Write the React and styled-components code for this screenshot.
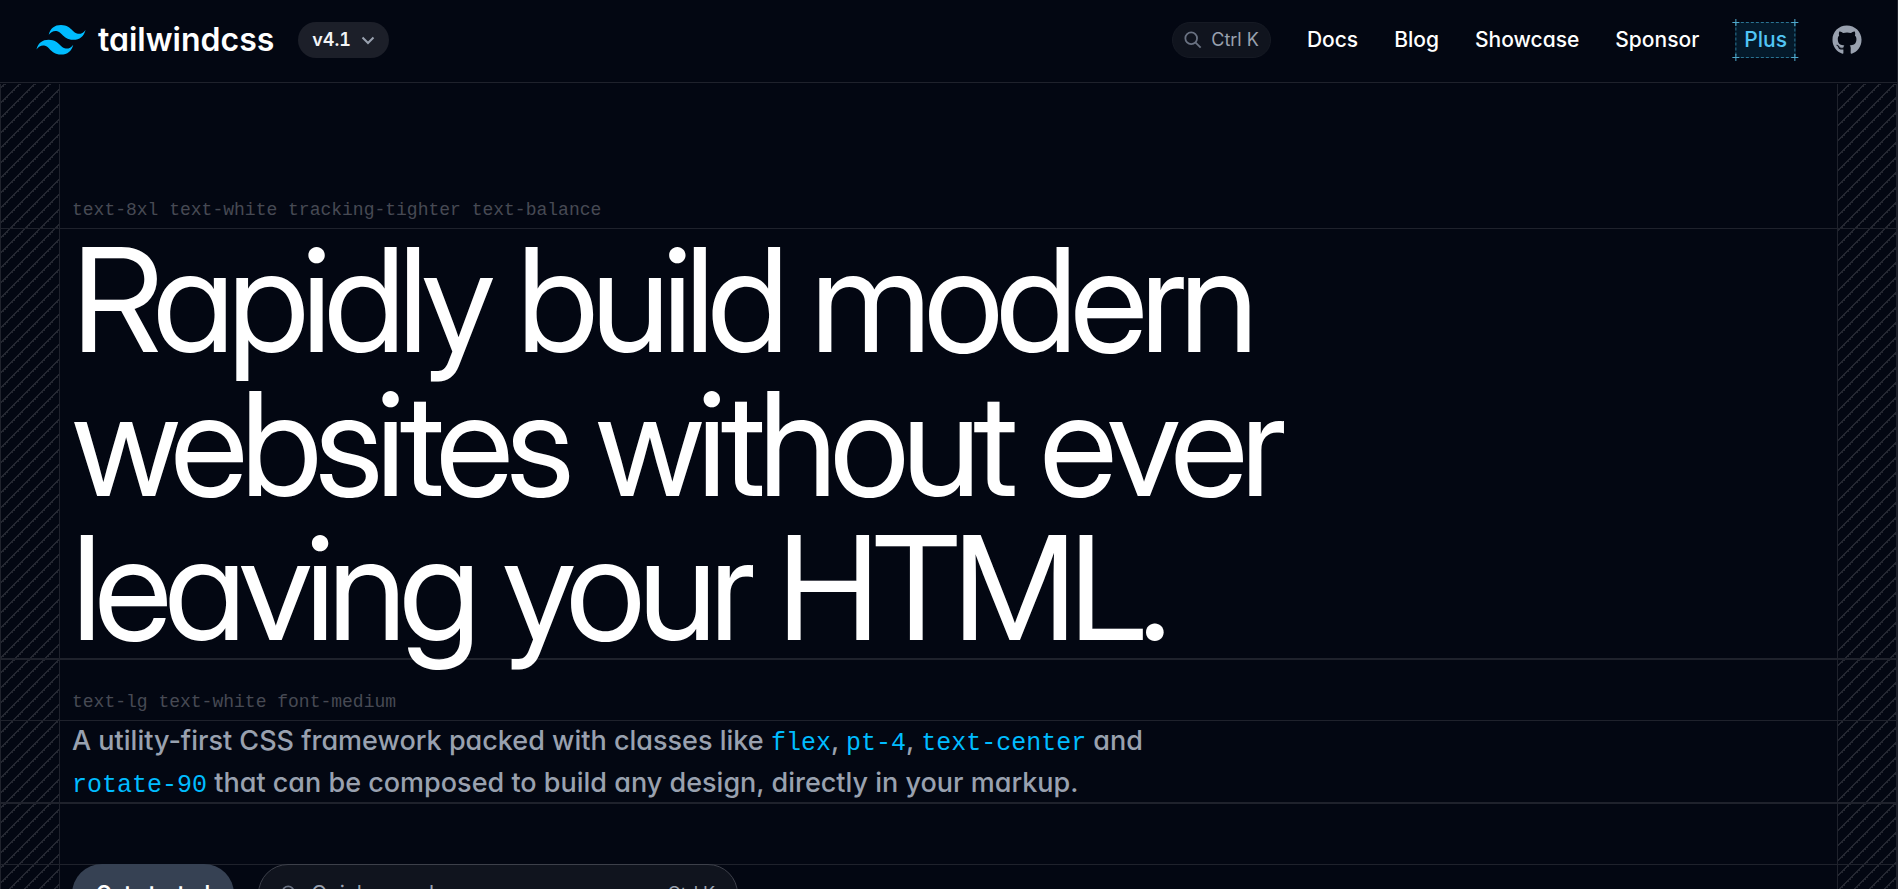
import React from "react";
import styled, { createGlobalStyle } from "styled-components";
import { FaGithub } from "react-icons/fa";

const SANS = `Inter, "Liberation Sans", sans-serif`;
const DISPLAY = `"Inter Display", ${SANS}`;
const MONO = `"Liberation Mono", monospace`;
const LINE = "#1f222c";
const HATCH = "#242731";

const GlobalStyle = createGlobalStyle`
  * {
    box-sizing: border-box;
  }
  html {
    scrollbar-width: none;
  }
  body {
    margin: 0;
    background: #030712;
    color: #fff;
    font-family: ${SANS};
    font-feature-settings: "cv11";
    -webkit-font-smoothing: antialiased;
  }
`;

const Page = styled.div`
  min-height: 100vh;
  border-right: 1px solid ${LINE};
`;
const Header = styled.header`
  display: flex;
  align-items: center;
  justify-content: space-between;
  height: 83px;
  padding: 0 35px 2px 36px;
  margin-bottom: 1px;
  border-bottom: 1px solid ${LINE};
`;
const Brand = styled.div`
  display: flex;
  align-items: center;
  gap: 24px;
`;
const Logo = styled.a`
  display: flex;
  align-items: center;
  gap: 12px;
  color: #fff;
  font-size: 32px;
  line-height: 36px;
  font-weight: 600;
  text-decoration: none;
  svg {
    display: block;
    width: 50px;
    height: 30px;
    fill: #00bcff;
  }
`;
const Version = styled.button`
  display: flex;
  align-items: center;
  gap: 10px;
  height: 36px;
  padding: 0 14px;
  border: 0;
  border-radius: 18px;
  background: #1c1f29;
  color: #f3f4f6;
  font: 600 18px/24px ${SANS};
  font-feature-settings: "cv11", "tnum";
  svg {
    width: 14px;
    height: 14px;
    fill: none;
    stroke: #99a1af;
    stroke-width: 2;
  }
`;
const Nav = styled.nav`
  display: flex;
  align-items: center;
  gap: 36px;
`;
const NavLink = styled.a`
  color: #fff;
  font-size: 21px;
  line-height: 36px;
  font-weight: 500;
  text-decoration: none;
`;
const SearchPill = styled.button`
  display: flex;
  align-items: center;
  gap: 9px;
  height: 36px;
  padding: 0 11px;
  border: 1px solid #161a24;
  border-radius: 18px;
  background: #10141e;
  color: #99a1af;
  font: 400 18px/24px ${SANS};
`;
const SearchIcon = styled.svg`
  width: 18px;
  height: 18px;
  fill: none;
  stroke: #6a7282;
  stroke-width: 2;
`;
const PlusLink = styled(NavLink)`
  position: relative;
  padding: 0 9px;
  color: #51c5f5;
  background: #04192a;
  svg {
    position: absolute;
    inset: -3px;
    width: calc(100% + 6px);
    height: calc(100% + 6px);
  }
`;
const GitHub = styled.a`
  display: flex;
  color: #99a1af;
  font-size: 30px;
`;
const Layout = styled.main`
  display: grid;
  grid-template-columns: 60px 1fr 60px;
  grid-template-rows: 144px auto 60px auto 60px auto;
`;
const Gutter = styled.div`
  grid-row: 1 / -1;
  grid-column: ${(props) => props.$column};
  border: 1px solid ${LINE};
  border-width: 0 1px;
  background-image: repeating-linear-gradient(
    315deg,
    ${HATCH} 0,
    ${HATCH} 2px,
    transparent 0,
    transparent 50%
  );
  background-size: 15px 15px;
  background-attachment: fixed;
`;
const Row = styled.div`
  grid-column: 1 / -1;
  grid-row: ${(props) => props.$row};
  padding: 0 72px;
`;
const LinedRow = styled(Row)`
  box-shadow: inset 0 1px ${LINE}, inset 0 -2px ${LINE};
`;
const LabelRow = styled(Row)`
  display: flex;
  align-items: flex-end;
  color: #474a54;
  font: 400 18px/36px ${MONO};
`;
const Title = styled.h1`
  max-width: 1344px;
  margin: 0;
  font-family: ${DISPLAY};
  font-size: 144px;
  line-height: 144px;
  font-weight: 400;
  letter-spacing: -0.05em;
  text-wrap: balance;
`;
const Lead = styled.p`
  max-width: 1152px;
  margin: 0;
  color: #99a1af;
  font-size: 27px;
  line-height: 42px;
  font-weight: 500;
  code {
    color: #00bcff;
    font-family: ${MONO};
    font-size: 25px;
    font-weight: 400;
    line-height: 36px;
  }
`;
const Actions = styled(Row)`
  display: flex;
  gap: 24px;
  box-shadow: inset 0 1px ${LINE};
`;
const GetStarted = styled.a`
  height: 60px;
  padding: 12px 24px;
  border-radius: 30px;
  background: #364153;
  color: #fff;
  font-size: 21px;
  line-height: 36px;
  font-weight: 600;
  text-decoration: none;
`;
const QuickSearch = styled.button`
  display: flex;
  align-items: center;
  gap: 12px;
  width: 480px;
  height: 60px;
  padding: 0 22px;
  border: 1px solid #3d404a;
  border-radius: 30px;
  background: #10141e;
  color: #99a1af;
  font: 400 21px/36px ${SANS};
`;
const Shortcut = styled.kbd`
  margin-left: auto;
  font: 400 18px/36px ${SANS};
`;

const LINKS = ["Docs", "Blog", "Showcase", "Sponsor"];

const Magnifier = () => (
  <SearchIcon viewBox="0 0 20 20" aria-hidden="true">
    <circle cx="8" cy="8" r="6.5" />
    <path d="M12.6 12.6 L18.5 18.5" />
  </SearchIcon>
);

const PlusFrame = () => (
  <svg viewBox="0 0 66 42" fill="none" aria-hidden="true">
    <rect
      x="3.5"
      y="3.5"
      width="59"
      height="35"
      stroke="#2a7392"
      strokeDasharray="3 2"
    />
    <path
      stroke="#51a9cc"
      d="M0 3.5h7M3.5 0v7M59 3.5h7M62.5 0v7M0 38.5h7M3.5 35v7M59 38.5h7M62.5 35v7"
    />
  </svg>
);

const App = () => {
  return (
    <Page>
      <GlobalStyle />
      <Header>
        <Brand>
          <Logo href="#">
            <svg viewBox="0 0 54 33" aria-hidden="true">
              <path d="M27 0c-7.2 0-11.7 3.6-13.5 10.8 2.7-3.6 5.85-4.95 9.45-4.05 2.054.513 3.522 2.004 5.147 3.653C30.744 13.09 33.808 16.2 40.5 16.2c7.2 0 11.7-3.6 13.5-10.8-2.7 3.6-5.85 4.95-9.45 4.05-2.054-.513-3.522-2.004-5.147-3.653C36.756 3.11 33.692 0 27 0zM13.5 16.2C6.3 16.2 1.8 19.8 0 27c2.7-3.6 5.85-4.95 9.45-4.05 2.054.514 3.522 2.004 5.147 3.653C17.244 29.29 20.308 32.4 27 32.4c7.2 0 11.7-3.6 13.5-10.8-2.7 3.6-5.85 4.95-9.45 4.05-2.054-.513-3.522-2.004-5.147-3.653C23.256 19.31 20.192 16.2 13.5 16.2z" />
            </svg>
            tailwindcss
          </Logo>
          <Version type="button">
            v4.1
            <svg viewBox="0 0 14 14" aria-hidden="true">
              <path d="M1.5 4.5 L7 10 L12.5 4.5" />
            </svg>
          </Version>
        </Brand>
        <Nav>
          <SearchPill type="button">
            <Magnifier />
            Ctrl K
          </SearchPill>
          {LINKS.map((link) => (
            <NavLink key={link} href="#">
              {link}
            </NavLink>
          ))}
          <PlusLink href="#">
            Plus
            <PlusFrame />
          </PlusLink>
          <GitHub href="#" aria-label="GitHub repository">
            <FaGithub />
          </GitHub>
        </Nav>
      </Header>
      <Layout>
        <Gutter $column={1} />
        <Gutter $column={3} />
        <LabelRow $row={1}>
          text-8xl text-white tracking-tighter text-balance
        </LabelRow>
        <LinedRow $row={2}>
          <Title>Rapidly build modern websites without ever leaving your HTML.</Title>
        </LinedRow>
        <LabelRow $row={3}>text-lg text-white font-medium</LabelRow>
        <LinedRow $row={4}>
          <Lead>
            A utility-first CSS framework packed with classes like{" "}
            <code>flex</code>, <code>pt-4</code>, <code>text-center</code> and{" "}
            <code>rotate-90</code> that can be composed to build any design,
            directly in your markup.
          </Lead>
        </LinedRow>
        <Actions $row={6}>
          <GetStarted href="#">Get started</GetStarted>
          <QuickSearch type="button">
            <Magnifier />
            Quick search
            <Shortcut>Ctrl K</Shortcut>
          </QuickSearch>
        </Actions>
      </Layout>
    </Page>
  );
};
export default App;
